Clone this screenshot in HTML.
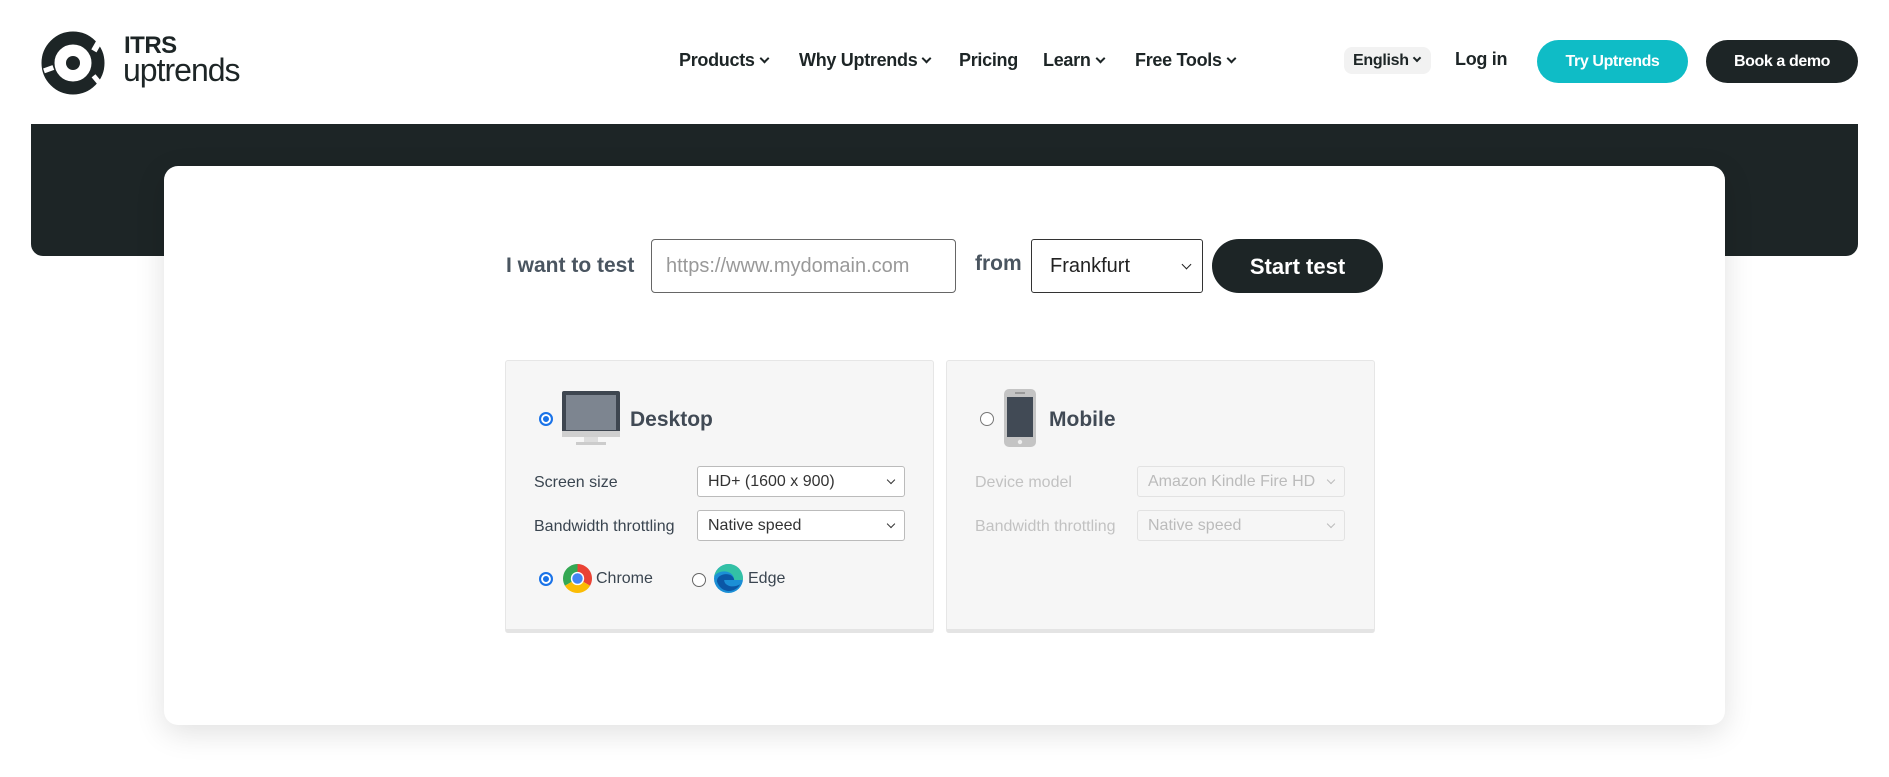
<!DOCTYPE html>
<html><head><meta charset="utf-8"><style>
*{box-sizing:border-box;margin:0;padding:0}
body{width:1889px;height:777px;background:#fff;font-family:"Liberation Sans",sans-serif;position:relative;overflow:hidden;color:#1d2526}
.a{position:absolute}
.nav{font-size:18px;font-weight:bold;color:#1d2526;top:50px;letter-spacing:-0.3px}
.chev{display:inline-block;width:7px;height:7px;border-right:2px solid #1d2526;border-bottom:2px solid #1d2526;transform:rotate(45deg);margin-left:6px;position:relative;top:-4px}
.panel{background:#f6f6f6;border:1px solid #e6e6e6;border-bottom:4px solid #e4e4e4;border-radius:3px}
.sel{background:#fff;border:1px solid #bbb;border-radius:3px;font-size:16px;color:#333;padding:6px 10px;height:31px}
.sel.dis{border-color:#e2e2e2;color:#bbb;background:#f6f6f6}
.sc{position:absolute;right:10px;top:10px;width:6px;height:6px;border-right:1.5px solid #333;border-bottom:1.5px solid #333;transform:rotate(45deg)}
.dis .sc{border-color:#bbb}
.lbl{font-size:16px;color:#3a4550}
.radio{width:14px;height:14px;border-radius:50%;border:1px solid #666;background:#fff}
.radio.on{border:2px solid #1a73e8;box-shadow:inset 0 0 0 2px #fff;background:#1a73e8}
</style></head><body>
<svg class="a" style="left:38px;top:28px" width="72" height="70" viewBox="0 0 72 70">
<circle cx="35" cy="35" r="25" fill="none" stroke="#1d2526" stroke-width="13"/>
<circle cx="35" cy="35" r="7" fill="#1d2526"/>
<rect x="44" y="0" width="6" height="14" fill="#fff" transform="rotate(30 35 35)"/>
<rect x="5" y="30" width="10" height="5" fill="#fff" transform="rotate(-20 35 35)"/>
<rect x="40" y="58" width="5" height="12" fill="#fff" transform="rotate(-40 35 35)"/>
</svg>
<div class="a" style="left:124px;top:34px;font-size:24px;font-weight:bold;letter-spacing:-0.5px;line-height:24px">ITRS</div>
<div class="a" style="left:123px;top:54px;font-size:32px;letter-spacing:-1px;line-height:32px">uptrends</div>
<div class="a nav" style="left:679px">Products<span class="chev"></span></div>
<div class="a nav" style="left:799px">Why Uptrends<span class="chev"></span></div>
<div class="a nav" style="left:959px">Pricing</div>
<div class="a nav" style="left:1043px">Learn<span class="chev"></span></div>
<div class="a nav" style="left:1135px">Free Tools<span class="chev"></span></div>
<div class="a" style="left:1344px;top:47px;width:87px;height:27px;background:#f2f2f2;border-radius:8px;font-size:16px;font-weight:bold;padding:5px 0 0 9px;letter-spacing:-0.3px">English<span class="chev" style="width:6px;height:6px;margin-left:5px"></span></div>
<div class="a nav" style="left:1455px;top:49px">Log in</div>
<div class="a" style="left:1537px;top:40px;width:151px;height:43px;background:#0fbcc6;border-radius:22px;color:#fff;font-size:16px;font-weight:bold;text-align:center;line-height:43px;letter-spacing:-0.4px">Try Uptrends</div>
<div class="a" style="left:1706px;top:40px;width:152px;height:43px;background:#1d2526;border-radius:22px;color:#fff;font-size:16px;font-weight:bold;text-align:center;line-height:43px;letter-spacing:-0.4px">Book a demo</div>
<div class="a" style="left:31px;top:124px;width:1827px;height:132px;background:#1d2526;border-radius:0 0 12px 12px"></div>
<div class="a" style="left:164px;top:166px;width:1561px;height:559px;background:#fff;border-radius:14px;box-shadow:0 8px 30px rgba(0,0,0,.12)"></div>
<div class="a" style="left:506px;top:254px;font-size:21px;font-weight:bold;color:#4a5560">I want to test</div>
<div class="a" style="left:651px;top:239px;width:305px;height:54px;border:1px solid #666;border-radius:4px;font-size:20px;color:#999;padding:15px 14px">https://www.mydomain.com</div>
<div class="a" style="left:975px;top:252px;font-size:21px;font-weight:bold;color:#4a5560">from</div>
<div class="a" style="left:1031px;top:239px;width:172px;height:54px;border:1px solid #333;border-radius:3px;font-size:20px;color:#222;padding:15px 18px">Frankfurt<span class="sc" style="top:21px;right:12px;border-color:#222;width:7px;height:7px"></span></div>
<div class="a" style="left:1212px;top:239px;width:171px;height:54px;background:#1d2526;border-radius:27px;color:#fff;font-size:22px;font-weight:bold;text-align:center;line-height:56px">Start test</div>

<div class="a panel" style="left:505px;top:360px;width:429px;height:273px"></div>
<div class="a panel" style="left:946px;top:360px;width:429px;height:273px"></div>

<div class="a radio on" style="left:539px;top:412px"></div>
<svg class="a" style="left:562px;top:391px" width="58" height="55" viewBox="0 0 58 55"><rect x="0" y="0" width="58" height="46" rx="2" fill="#3e4650"/><rect x="4" y="4" width="50" height="35" fill="#7d8590"/><rect x="0" y="40" width="58" height="6" fill="#cfcfcf"/><rect x="22" y="46" width="14" height="5" fill="#ddd"/><rect x="14" y="51" width="30" height="3" fill="#ccc"/></svg>
<div class="a" style="left:630px;top:408px;font-size:21px;font-weight:bold;color:#414a55">Desktop</div>
<div class="a lbl" style="left:534px;top:474px">Screen size</div>
<div class="a sel" style="left:697px;top:466px;width:208px">HD+ (1600 x 900)<span class="sc"></span></div>
<div class="a lbl" style="left:534px;top:518px">Bandwidth throttling</div>
<div class="a sel" style="left:697px;top:510px;width:208px">Native speed<span class="sc"></span></div>
<div class="a radio on" style="left:539px;top:572px"></div>
<svg class="a" style="left:563px;top:564px" width="29" height="29" viewBox="-10 -10 20 20"><path d="M0-10A10 10 0 0 1 8.66 5L0 0Z" fill="#ea4335"/><path d="M0 0L0-10A10 10 0 0 0-8.66 5Z" fill="#34a853"/><path d="M-8.66 5A10 10 0 0 0 8.66 5L0 0Z" fill="#fbbc05"/><circle r="4.6" fill="#fff"/><circle r="3.6" fill="#4285f4"/></svg>
<div class="a lbl" style="left:596px;top:570px">Chrome</div>
<div class="a radio" style="left:692px;top:573px"></div>
<svg class="a" style="left:714px;top:564px" width="29" height="29" viewBox="0 0 20 20"><circle cx="10" cy="10" r="10" fill="#1b8fd6"/><path d="M2 12c0-6 11-7 12-1H7c0 4 6 6 11 3-3 6-13 7-16-2z" fill="#0b57a6"/><path d="M20 10c0-5-4-10-10-10C5 0 1 4 0 9c2-5 13-6 14 2h6z" fill="#36c7a0" opacity=".9"/></svg>
<div class="a lbl" style="left:748px;top:570px">Edge</div>

<div class="a radio" style="left:980px;top:412px;border-color:#777"></div>
<svg class="a" style="left:1004px;top:389px" width="32" height="58" viewBox="0 0 32 58"><rect x="0" y="0" width="32" height="58" rx="5" fill="#c4c4c4"/><rect x="3" y="8" width="26" height="40" fill="#414a55"/><rect x="11" y="3" width="10" height="2" fill="#999"/><circle cx="16" cy="53" r="2.2" fill="#eee"/></svg>
<div class="a" style="left:1049px;top:408px;font-size:21px;font-weight:bold;color:#414a55">Mobile</div>
<div class="a lbl" style="left:975px;top:474px;color:#c2c2c2">Device model</div>
<div class="a sel dis" style="left:1137px;top:466px;width:208px">Amazon Kindle Fire HD<span class="sc"></span></div>
<div class="a lbl" style="left:975px;top:518px;color:#c2c2c2">Bandwidth throttling</div>
<div class="a sel dis" style="left:1137px;top:510px;width:208px">Native speed<span class="sc"></span></div>
</body></html>
